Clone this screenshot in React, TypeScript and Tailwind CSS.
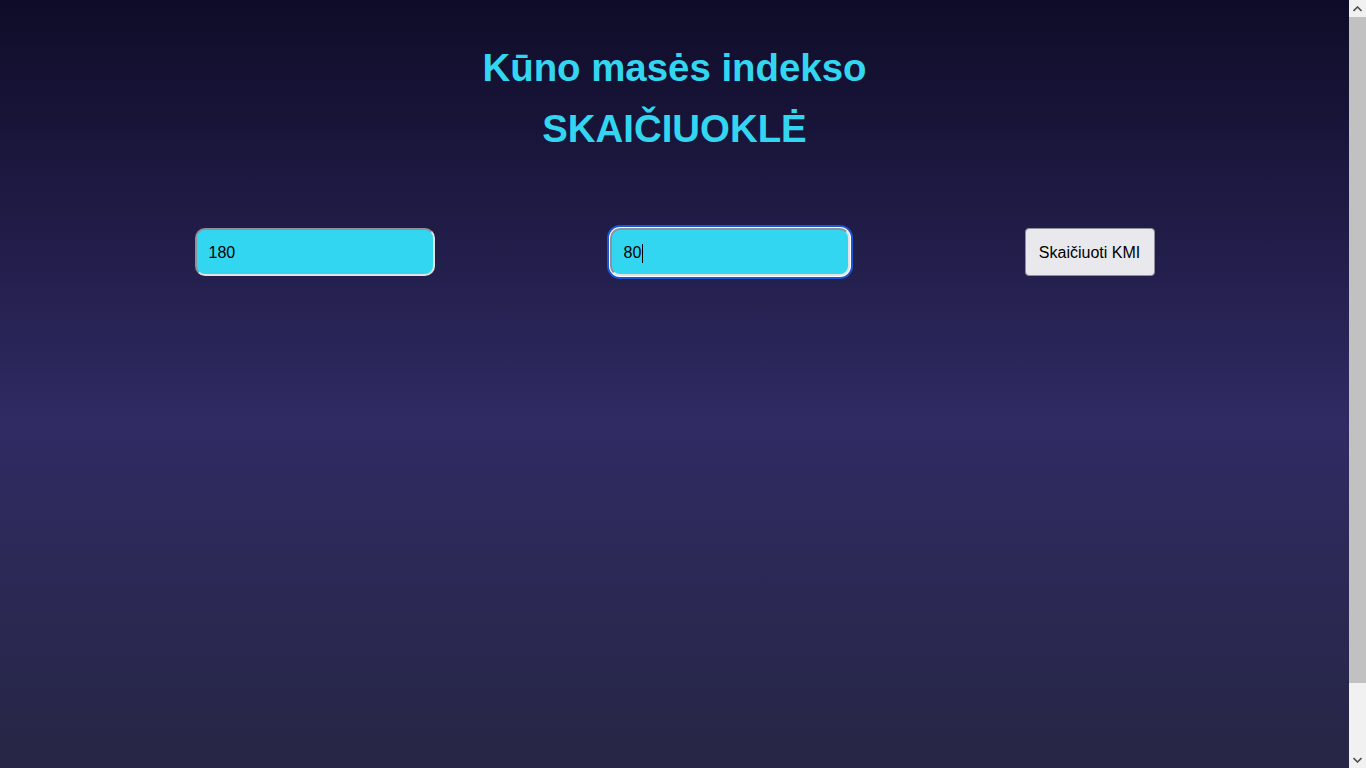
export default function App() {
  return (
    <div
      className="flex h-[768px] overflow-hidden"
      style={{ fontFamily: '"Liberation Sans", Arial, sans-serif' }}
    >
      <div className="min-w-0 flex-1">
        <div className="h-[847px] bg-gradient-to-b from-[#0f0c29] via-[#302b63] to-[#24243e]">
          <h1 className="pt-[37px] text-center text-[38.4px] font-bold leading-[61px] text-[#33d6f1]">
            Kūno masės indekso
            <br />
            SKAIČIUOKLĖ
          </h1>
          <div className="mt-[69px] flex justify-center gap-[175px]">
            <input
              type="text"
              defaultValue="180"
              className="h-[48px] w-[240px] rounded-[10px] border-2 border-t-[#8f8f9d] border-l-[#8f8f9d] border-r-[#e3e3e3] border-b-[#e3e3e3] bg-[#33d6f1] px-3 pt-[2px] text-base text-black outline-none"
            />
            <div className="relative">
              <input
                type="text"
                defaultValue="80"
                className="h-[48px] w-[240px] rounded-[10px] border-2 border-t-[#8f8f9d] border-l-[#8f8f9d] border-r-[#e3e3e3] border-b-[#e3e3e3] bg-[#33d6f1] px-3 pt-[2px] text-base text-black outline-none ring-2 ring-[#1a55d4] ring-offset-1 ring-offset-white"
              />
              <span className="pointer-events-none absolute left-[32px] top-[16px] h-[19px] w-px bg-black" />
            </div>
            <button className="h-[48px] w-[130px] rounded-[4px] border border-[#8f8f9d] bg-[#e9e9ed] pt-[2px] text-base text-black">
              Skaičiuoti KMI
            </button>
          </div>
        </div>
      </div>
      {/* scrollbar */}
      <div className="flex w-[17px] shrink-0 flex-col bg-[#f1f1f1]">
        <div className="flex h-[17px] items-center justify-center">
          <svg width="9" height="6" viewBox="0 0 9 6">
            <path d="M0.5 5 L4.5 1 L8.5 5" fill="none" stroke="#505050" strokeWidth="1.6" />
          </svg>
        </div>
        <div className="h-[666px] bg-[#c1c1c1]" />
        <div className="flex-1" />
        <div className="flex h-[17px] items-center justify-center">
          <svg width="9" height="6" viewBox="0 0 9 6">
            <path d="M0.5 1 L4.5 5 L8.5 1" fill="none" stroke="#505050" strokeWidth="1.6" />
          </svg>
        </div>
      </div>
    </div>
  );
}
